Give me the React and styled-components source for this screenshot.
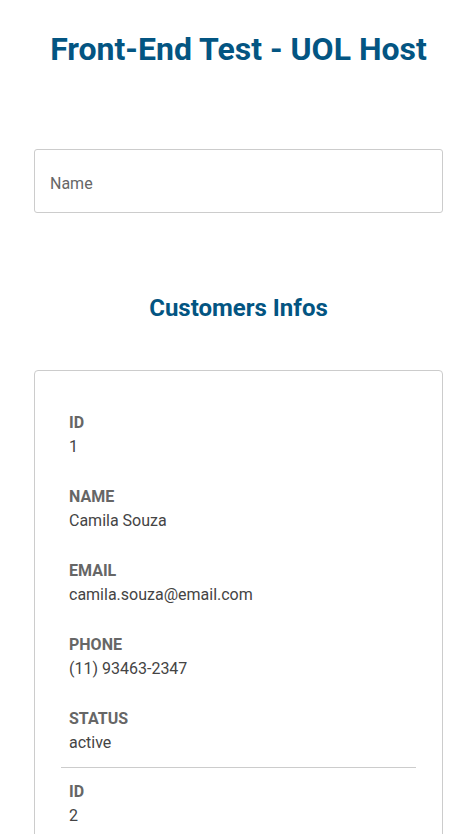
import React from 'react';
import styled, { createGlobalStyle } from 'styled-components';

const GlobalStyle = createGlobalStyle`
  * {
    box-sizing: border-box;
  }

  body {
    margin: 0;
    background: #fff;
    font-family: Roboto, 'Liberation Sans', sans-serif;
  }
`;

const Page = styled.main`
  padding: 0 32px 0 34px;
  width: 475px;
`;

const Title = styled.h1`
  margin: 0;
  padding-top: 31px;
  font-size: 32px;
  line-height: 36px;
  font-weight: 700;
  text-align: center;
  color: #035582;
`;

const Search = styled.input`
  display: block;
  width: 409px;
  height: 64px;
  margin-top: 82px;
  padding: 4px 15px 0;
  border: 1px solid #cccccc;
  border-radius: 3px;
  font-family: inherit;
  font-size: 16px;
  color: #444;
  outline: none;

  &::placeholder {
    color: #666;
  }
`;

const Subtitle = styled.h2`
  margin: 81px 0 0;
  font-size: 24px;
  line-height: 28px;
  font-weight: 700;
  text-align: center;
  color: #035582;
`;

const Card = styled.section`
  width: 409px;
  margin-top: 48px;
  padding: 28px 26px 27px;
  border: 1px solid #cccccc;
  border-radius: 4px;
`;

const Customer = styled.div`
  display: flex;
  flex-direction: column;
  gap: 26px;
  padding: 12px 8px;
  border-bottom: ${(p) => (p.last ? 'none' : '1px solid #cccccc')};
`;

const Field = styled.div`
  font-size: 16px;
  line-height: 24px;
`;

const Label = styled.div`
  font-weight: 700;
  color: #666;
`;

const Value = styled.div`
  color: #444;
`;

const customers = [
  { id: 1, name: 'Camila Souza', email: 'camila.souza@email.com', phone: '(11) 93463-2347', status: 'active' },
  { id: 2, name: 'Rafael Lima', email: 'rafael.lima@email.com', phone: '(21) 98765-4321', status: 'inactive' },
];

const App = () => {
  const renderCustomer = (customer, index) => {
    const fields = [
      ['ID', customer.id],
      ['NAME', customer.name],
      ['EMAIL', customer.email],
      ['PHONE', customer.phone],
      ['STATUS', customer.status],
    ];

    return (
      <Customer key={customer.id} last={index === customers.length - 1}>
        {fields.map(([label, value]) => (
          <Field key={label}>
            <Label>{label}</Label>
            <Value>{value}</Value>
          </Field>
        ))}
      </Customer>
    );
  };

  return (
    <Page>
      <GlobalStyle />
      <Title>Front-End Test - UOL Host</Title>
      <Search placeholder="Name" />
      <Subtitle>Customers Infos</Subtitle>
      <Card>
        {customers.map(renderCustomer)}
      </Card>
    </Page>
  );
};

export default App;
